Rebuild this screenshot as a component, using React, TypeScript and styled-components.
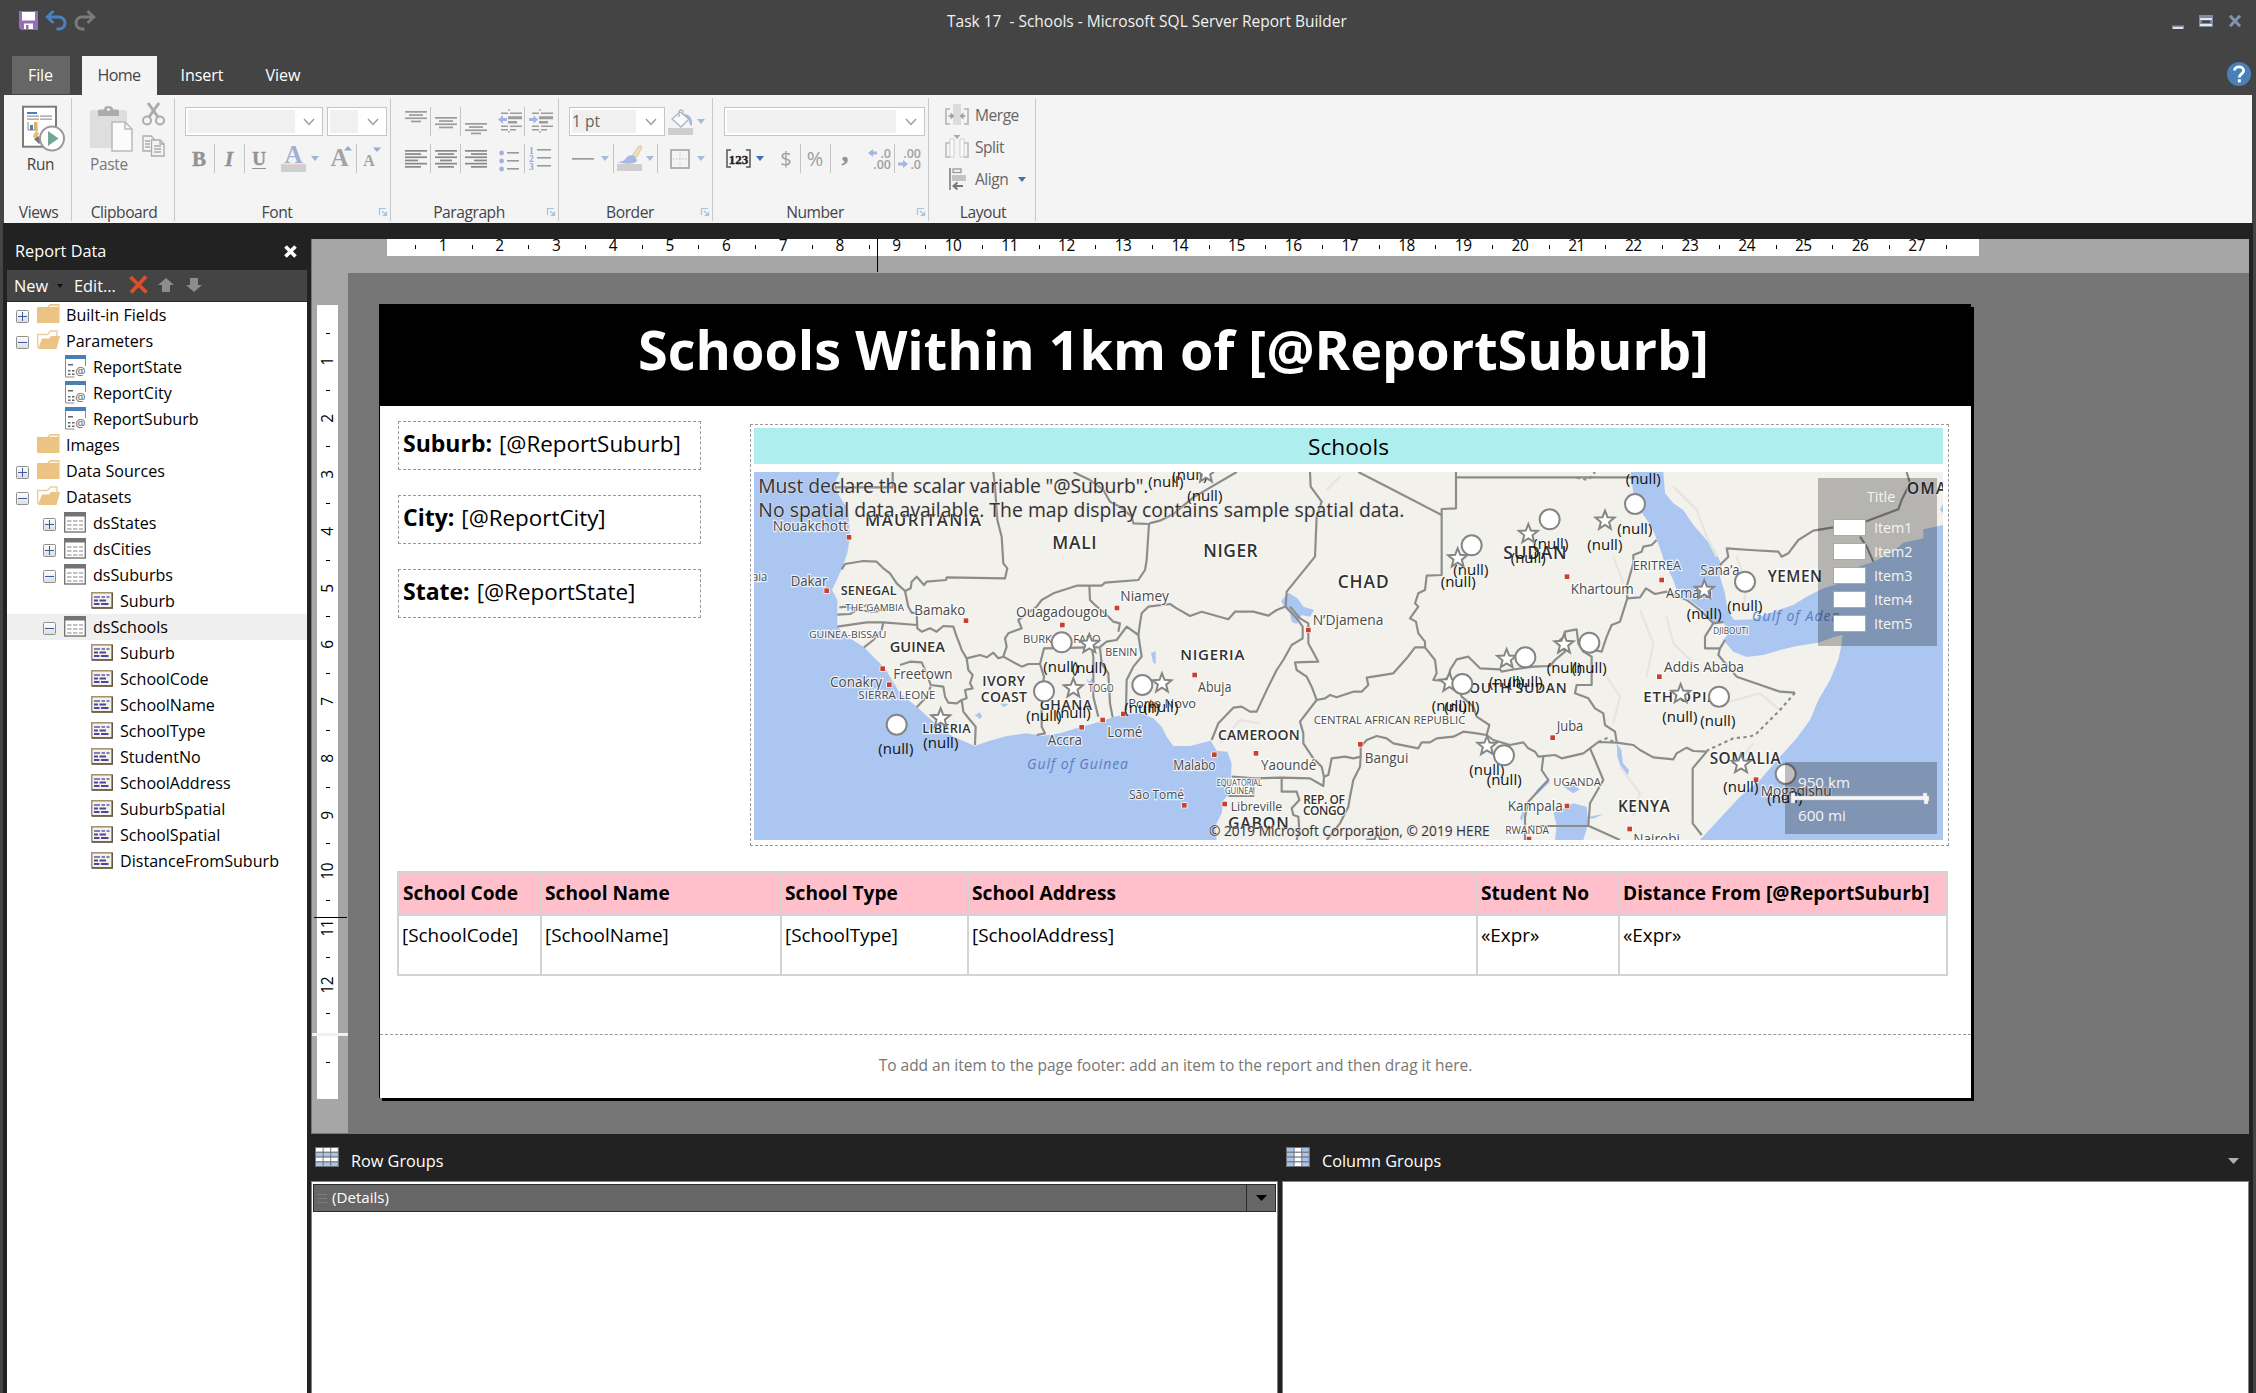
import React from "react";
import styled, { createGlobalStyle, css } from "styled-components";

const GlobalStyle = createGlobalStyle`
  html, body { margin: 0; padding: 0; background: #444; }
  *, *::before, *::after { box-sizing: border-box; }
  svg { display: block; flex: none; overflow: visible; }
`;

const uiFont = `"Open Sans", "Noto Sans", sans-serif`;

const Window = styled.div`
  width: 2256px;
  height: 1393px;
  display: flex;
  flex-direction: column;
  background: #444;
  font-family: ${uiFont};
  font-size: 16.1px;
  color: #000;
  overflow: hidden;
  white-space: pre;
`;

/* ---------- title bar ---------- */

const TitleBar = styled.header`
  height: 56px;
  display: grid;
  grid-template-columns: 947px 400px 1fr;
  align-items: center;
  padding-bottom: 15px;
  color: #f2f2f2;
  font-size: 15.49px;
`;
const QuickAccess = styled.div`
  display: flex;
  align-items: center;
  padding: 0 0 1px 19px;
  gap: 7px;
`;
const WindowButtons = styled.div`
  display: flex;
  align-items: center;
  justify-content: flex-end;
  gap: 15px;
  padding-right: 14px;
`;

/* ---------- ribbon tabs ---------- */

const TabStrip = styled.nav`
  height: 39px;
  display: flex;
  padding-left: 12px;
  letter-spacing: -0.1px;
`;
const tabKinds = {
  file: css`background: #666; color: #fff; width: 58px; margin-right: 12px; height: 38px; padding-right: 1px;`,
  active: css`background: #f4f4f4; color: #444; width: 75px; letter-spacing: -0.6px; margin-right: 5px; padding-right: 1px;`,
  plain: css`color: #fff; width: 80px;`,
};
const Tab = styled.div<{ $kind: keyof typeof tabKinds }>`
  display: flex;
  align-items: center;
  justify-content: center;
  height: 39px;
  padding-bottom: 1px;
  margin-right: 1px;
  ${(p) => tabKinds[p.$kind]}
`;
const HelpSlot = styled.div`
  margin-left: auto;
  padding: 6px 5px 0 0;
`;

/* ---------- ribbon ---------- */

const Ribbon = styled.section`
  height: 128px;
  margin: 0 4px;
  padding: 3px 0 2px;
  background: #f4f4f4;
  display: flex;
`;
const Group = styled.div<{ $w: number }>`
  width: ${(p) => p.$w}px;
  border-right: 1px solid #c8c8c8;
  display: flex;
  flex-direction: column;
  justify-content: space-between;
`;
const GroupFoot = styled.div<{ $launcher?: boolean }>`
  height: 20px;
  display: flex;
  align-items: center;
  padding: 2px ${(p) => (p.$launcher ? 3 : 0)}px 0 ${(p) => (p.$launcher ? 0 : 2)}px;
`;
const GroupLabel = styled.span`
  flex: 1;
  text-align: center;
  color: #444;
  font-size: 15.6px;
  letter-spacing: -0.45px;
`;
const ToolRows = styled.div`
  display: flex;
  flex-direction: column;
  gap: 8px;
  padding-top: 9px;
`;
const ToolRow = styled.div`
  height: 29px;
  display: flex;
  align-items: center;
`;
const Slot = styled.div<{ $ml?: number; $mt?: number; $w?: number }>`
  margin-left: ${(p) => p.$ml ?? 0}px;
  margin-top: ${(p) => p.$mt ?? 0}px;
  ${(p) => p.$w && `width: ${p.$w}px;`}
  display: flex;
  flex: none;
  justify-content: center;
  align-items: center;
`;
const Rule = styled.i<{ $ml?: number }>`
  width: 1px;
  height: 29px;
  margin-left: ${(p) => p.$ml ?? 4}px;
  background: #c4c4c4;
  flex: none;
`;
const ComboBox = styled.div<{ $w: number; $ml: number }>`
  width: ${(p) => p.$w}px;
  margin-left: ${(p) => p.$ml}px;
  height: 29px;
  flex: none;
  border: 1px solid #c6c6c6;
  background: #fff;
  display: flex;
  align-items: center;
  justify-content: space-between;
  padding: 2px 7px 2px 2px;
`;
const ComboField = styled.div<{ $w: number }>`
  width: ${(p) => p.$w}px;
  height: 23px;
  background: #f0f0f0;
  color: #666;
  font-size: 15.6px;
  line-height: 22px;
`;
const Glyph = styled.span<{ $size?: number; $variant?: "italic" | "underline" | "plain"; $color?: string }>`
  font-family: "Liberation Serif", "Times New Roman", serif;
  font-weight: bold;
  font-size: ${(p) => p.$size ?? 22}px;
  line-height: 26px;
  color: ${(p) => p.$color ?? "#929292"};
  font-style: ${(p) => (p.$variant === "italic" ? "italic" : "normal")};
  text-decoration: ${(p) => (p.$variant === "underline" ? "underline" : "none")};
  text-underline-offset: 3px;
  -webkit-text-stroke: 0.4px ${(p) => p.$color ?? "#929292"};
`;
const NumGlyph = styled.span`
  font-size: 20px;
  line-height: 26px;
  color: #a0a0a0;
`;
const BigTools = styled.div<{ $pl: number }>`
  display: flex;
  padding: 7px 0 0 ${(p) => p.$pl}px;
`;
const BigTool = styled.div<{ $color: string; $w: number; $shift: number }>`
  width: ${(p) => p.$w}px;
  display: flex;
  flex-direction: column;
  align-items: center;
  color: ${(p) => p.$color};
  font-size: 15.4px;
  letter-spacing: -0.3px;
  line-height: 25px;
  & > span { margin-right: ${(p) => p.$shift}px; }
`;
const SmallTools = styled.div`
  display: flex;
  flex-direction: column;
  gap: 9px;
  margin: -2px 0 0 9px;
`;
const LayoutTools = styled.div`
  display: flex;
  flex-direction: column;
  padding: 1px 0 0 16px;
`;
const LayoutTool = styled.div`
  height: 32px;
  display: flex;
  align-items: center;
  gap: 6px;
  color: #666;
  font-size: 15.6px;
  letter-spacing: -0.5px;
`;

/* ---------- workspace ---------- */

const Workspace = styled.div`
  flex: 1;
  min-height: 0;
  margin: 0 3px;
  background: #222;
  display: flex;
  padding-left: 4px;
`;
const SidePanel = styled.aside`
  width: 300px;
  display: flex;
  flex-direction: column;
`;
const SideHeader = styled.div`
  height: 47px;
  padding: 9px 10px 0 8px;
  display: flex;
  align-items: center;
  justify-content: space-between;
  color: #fff;
  font-size: 16.3px;
`;
const SideToolbar = styled.div`
  height: 32px;
  background: #444;
  border-bottom: 1px solid #2a2a2a;
  color: #fff;
  display: flex;
  align-items: center;
  padding: 0 0 0 7px;
  font-size: 16.3px;
`;
const ToolbarText = styled.span`
  padding-top: 1px;
`;
const Tree = styled.div`
  flex: 1;
  background: #fff;
`;
const TreeRow = styled.div<{ $level: number; $selected?: boolean }>`
  height: 26px;
  display: flex;
  align-items: center;
  padding-left: ${(p) => 9 + p.$level * 27}px;
  background: ${(p) => (p.$selected ? "#efefef" : "transparent")};
`;
const ExpanderCell = styled.div`
  width: 21px;
  padding: 3px 0 0 0;
`;
const TreeIcon = styled.div`
  width: 29px;
  padding-bottom: 2px;
`;
const Main = styled.main`
  margin-left: 4px;
  width: 1938px;
  padding-top: 16px;
  display: flex;
  flex-direction: column;
`;
const Designer = styled.div`
  height: 895px;
  background: #767676;
  border-left: 1px solid #767676;
  display: flex;
  flex-direction: column;
`;
const HRuler = styled.div`
  position: relative;
  height: 34px;
  background: #a6a6a6;
  padding-left: 75px;
  flex: none;
`;
const HScale = styled.div`
  width: 1592px;
  height: 17px;
  background: #fff;
  display: flex;
  align-items: center;
  padding-left: 28px;
  padding-bottom: 3px;
  font-size: 15.4px;
`;
const HUnit = styled.div`
  width: 56.69px;
  display: flex;
  align-items: center;
  flex: none;
  line-height: 14px;
`;
const HTick = styled.i`
  width: 1px;
  height: 4px;
  margin-top: 1px;
  background: #000;
`;
const HNumber = styled.span`
  flex: 1;
  text-align: center;
  letter-spacing: -0.4px;
  padding-right: 2px;
`;
const HMarker = styled.i`
  position: absolute;
  left: 565px;
  top: 0;
  width: 1px;
  height: 33px;
  background: #000;
`;
const DesignRow = styled.div`
  flex: 1;
  min-height: 0;
  display: flex;
`;
const VRuler = styled.div`
  position: relative;
  width: 36px;
  background: #a6a6a6;
  padding: 32px 0 0 5px;
  flex: none;
  border-bottom: 1px solid #767676;
`;
const VScale = styled.div<{ $h: number; $pad: number }>`
  width: 21px;
  height: ${(p) => p.$h}px;
  padding-top: ${(p) => p.$pad}px;
  background: #fff;
  display: flex;
  flex-direction: column;
  align-items: center;
  font-size: 15.4px;
`;
const VUnit = styled.div`
  height: 56.69px;
  width: 17px;
  display: flex;
  flex-direction: column;
  align-items: center;
  flex: none;
`;
const VTick = styled.i`
  width: 4px;
  height: 1px;
  background: #000;
  flex: none;
`;
const VNumber = styled.span`
  flex: 1;
  writing-mode: vertical-rl;
  transform: rotate(180deg);
  text-align: center;
  line-height: 17px;
  letter-spacing: -0.3px;
  padding-top: 1px;
`;
const VBreak = styled.div`
  height: 3px;
  width: 36px;
  margin-left: -5px;
  background: #f0f0f0;
`;
const VMarker = styled.i`
  position: absolute;
  top: 644px;
  left: 2px;
  width: 33px;
  height: 1px;
  background: #000;
`;
const Canvas = styled.div`
  flex: 1;
  padding: 31px 0 0 31px;
`;
const Page = styled.div`
  width: 1592px;
  height: 794px;
  background: #fff;
  border-left: 1px solid #000;
  box-shadow: 3px 3px 0 #000;
  display: flex;
  flex-direction: column;
`;
const PageTitle = styled.h1`
  margin: 0;
  height: 102px;
  background: #000;
  color: #fff;
  font-size: 53.97px;
  font-weight: 700;
  display: flex;
  align-items: center;
  justify-content: center;
  padding: 0 4px 13px 0;
`;
const PageBody = styled.div`
  height: 628px;
  display: flex;
  flex-direction: column;
`;
const UpperRow = styled.div`
  height: 465px;
  display: flex;
`;
const ParamColumn = styled.div`
  padding: 15px 0 0 18px;
  display: flex;
  flex-direction: column;
  gap: 25px;
`;
const ParamBox = styled.div`
  width: 303px;
  height: 49px;
  border: 1px dashed #999;
  padding: 0 0 5px 4px;
  display: flex;
  align-items: center;
  font-size: 22.4px;
  gap: 7px;
`;
const ParamName = styled.b`
  font-size: 23px;
`;
const MapItem = styled.div`
  width: 1199px;
  height: 422px;
  margin: 18px 0 0 49px;
  border: 1px dashed #999;
  padding: 3px;
`;
const MapTitle = styled.div`
  width: 1189px;
  height: 36px;
  margin-bottom: 8px;
  background: #afeeee;
  display: flex;
  align-items: center;
  justify-content: center;
  font-size: 22.67px;
`;
const MapViewport = styled.div`
  position: relative;
  width: 1189px;
  height: 368px;
  overflow: hidden;
`;
const Legend = styled.div`
  position: absolute;
  left: 1064px;
  top: 6px;
  width: 119px;
  height: 168px;
  background: rgba(0, 0, 0, 0.25);
  color: #f4f4f4;
  font-size: 14.3px;
  padding: 7px 0 0 15px;
`;
const LegendTitle = styled.div`
  height: 31px;
  line-height: 24px;
  padding-left: 34px;
`;
const LegendItem = styled.div`
  height: 24px;
  display: flex;
  align-items: center;
  gap: 8px;
  padding-bottom: 1px;
`;
const Swatch = styled.i`
  width: 33px;
  height: 17px;
  background: #fff;
  border: 1px solid #aaa;
`;
const ScaleBox = styled.div`
  position: absolute;
  left: 1031px;
  top: 290px;
  width: 152px;
  height: 72px;
  background: rgba(0, 0, 0, 0.25);
  color: #f4f4f4;
  font-size: 15.2px;
  padding: 9px 0 0 6px;
  line-height: 22px;
`;
const ScaleText = styled.div`
  padding-left: 7px;
`;

const ReportTable = styled.div`
  display: grid;
  grid-template-columns: 143px 240px 187px 509px 142px 328px;
  width: 1551px;
  margin-left: 17px;
  border: solid #d3d3d3;
  border-width: 2px 0 0 2px;
`;
const HeadCell = styled.div`
  height: 43px;
  padding: 0 0 1px 3px;
  background: #ffc0cb;
  border: solid #d3d3d3;
  border-width: 0 2px 2px 0;
  font-weight: 700;
  font-size: 19.15px;
  display: flex;
  align-items: center;
  &:first-child { padding-left: 4px; }
`;
const DataCell = styled.div`
  height: 60px;
  padding: 7px 0 0 3px;
  border: solid #d3d3d3;
  border-width: 0 2px 2px 0;
  font-size: 18.9px;
  line-height: 25px;
`;
const PageFooter = styled.div`
  flex: 1;
  border-top: 1px dashed #999;
  color: #767676;
  font-size: 15.51px;
  display: flex;
  align-items: center;
  justify-content: center;
  padding-bottom: 3px;
`;

/* ---------- grouping pane ---------- */

const GroupPanes = styled.div`
  flex: 1;
  display: flex;
  gap: 4px;
`;
const Pane = styled.section`
  width: 967px;
  display: flex;
  flex-direction: column;
`;
const PaneHeader = styled.div`
  height: 47px;
  padding: 7px 10px 0 4px;
  display: flex;
  align-items: center;
  gap: 12px;
  color: #fff;
  font-size: 16.25px;
`;
const PaneIcon = styled.div`
  padding-bottom: 9px;
`;
const PaneArrow = styled.div`
  margin-left: auto;
`;
const PaneBody = styled.div`
  flex: 1;
  background: #fff;
  border: 1px solid #85808a;
  border-bottom: 0;
  padding: 2px 1px;
`;
const DetailsBar = styled.div`
  height: 28px;
  border: 1px solid #2b2b2b;
  background: #666;
  color: #fff;
  display: flex;
  align-items: center;
  padding-left: 4px;
  font-size: 15.1px;
`;
const DetailsText = styled.span`
  flex: 1;
  padding: 0 0 2px 5px;
`;
const DetailsDrop = styled.div`
  width: 29px;
  height: 26px;
  border-left: 1px solid #2b2b2b;
  display: flex;
  align-items: center;
  justify-content: center;
`;

/* ---------- icons ---------- */

const Tri = ({ c = "#9db3d8", w = 8, h = 5 }: { c?: string; w?: number; h?: number }) => (
  <svg width={w} height={h} viewBox="0 0 8 5" preserveAspectRatio="none"><path d="M0 0h8L4 5z" fill={c} /></svg>
);
const Chevron = () => (
  <svg width="12" height="8" viewBox="0 0 12 8"><path d="M1 1l5 5.5L11 1" fill="none" stroke="#9a9a9a" strokeWidth="1.3" /></svg>
);
const Launcher = () => (
  <svg width="8" height="8" viewBox="0 0 8 8"><path d="M.5 7V.5H7M3 3l3 3M7.5 3.5v4h-4" fill="none" stroke="#a8c4dc" strokeWidth="1.2" /><path d="M7.5 4v3.5H4z" fill="#a8c4dc" /></svg>
);
const Lines = ({ rows, widths, align, top, color = "#9c9c9c" }: { rows: number; widths: number[]; align: "l" | "c" | "r"; top: number; color?: string }) => (
  <svg width="22" height="29" viewBox="0 0 22 29">
    {Array.from({ length: rows }, (_, i) => {
      const w = widths[i % widths.length];
      const x = align === "l" ? 0 : align === "c" ? (22 - w) / 2 : 22 - w;
      return <rect key={i} x={x} y={top + i * 3.2} width={w} height="1.7" fill={color} />;
    })}
  </svg>
);
const Indent = ({ dir }: { dir: "out" | "in" }) => (
  <svg width="24" height="26" viewBox="0 0 24 26" fill="#9c9c9c">
    <path d="M3 3.6h7v1.5H3zM12 3.6h12v1.5H12zM10 7.2h14v3H10zM10 12h9v2.6h-9zM3 16.4h7v1.5H3zM12 16.4h12v1.5H12zM3 20h7v1.5H3zM12 20h6v1.5h-6zM10.4 0h1.2v2h-1.2zM10.4 22h1.2v2h-1.2z" />
    {dir === "out" ? <path d="M0 10.5l5-4.2v2.8h4v2.8H5v2.8z" fill="#a3b5e3" /> : <path d="M9 10.5L4.5 6.3v2.8H0v2.8h4.5v2.8z" fill="#a3b5e3" />}
  </svg>
);
const Bullets = () => (
  <svg width="20" height="24" viewBox="0 0 20 24">
    {[4, 12, 20].map((y) => <g key={y}><circle cx="2.6" cy={y} r="2.4" fill="#a3b1d9" /><rect x="8" y={y - 1} width="12" height="1.6" fill="#999" /></g>)}
  </svg>
);
const Numbered = () => (
  <svg width="22" height="26" viewBox="0 0 22 26">
    {[5, 13, 21].map((y, i) => <g key={y}><text x="0" y={y + 3.4} fontFamily="Liberation Serif, serif" fontWeight="bold" fontSize="9.5" fill="#94a5d8">{i + 1}</text><rect x="8" y={y - 2} width="14" height="1.6" fill="#999" /></g>)}
  </svg>
);
const SaveIcon = () => (
  <svg width="19" height="19" viewBox="0 0 19 19"><path d="M0 0h19v19H2l-2-2z" fill="#976cbd" /><path d="M3 1h13v8.5H3zM5 12.5h9V18h-9z" fill="#fff" /><path d="M7 14h2.5v4H7z" fill="#976cbd" /></svg>
);
const Undo = ({ c, flip }: { c: string; flip?: boolean }) => (
  <svg width="22" height="21" viewBox="0 0 22 21"><g transform={flip ? "translate(22 0) scale(-1 1)" : undefined} fill="none" stroke={c} strokeWidth="3">
    <path d="M3 7h11a5.5 5.5 0 0 1 0 12h-2.5" /><path d="M8.5 1L2.2 7l6.3 6" strokeWidth="2.8" /></g></svg>
);
const MinIcon = () => (
  <svg width="12" height="16" viewBox="0 0 12 16"><path d="M0 12.5h12v1.5H0z" fill="#7f92b5" /><path d="M.5 14h11v2H.5z" fill="#e0e0e0" /></svg>
);
const MaxIcon = () => (
  <svg width="14" height="12" viewBox="0 0 14 12"><path d="M0 0h14v12H0z" fill="#7f8ba3" /><path d="M1 3h12v2H1zM1 9h12v2H1z" fill="#e6e6e6" /><path d="M3 5.5h8v2.5H3z" fill="#444" /></svg>
);
const CloseWinIcon = () => (
  <svg width="14" height="12" viewBox="0 0 14 12"><path d="M2 .8l10 10.4M12 .8L2 11.2" stroke="#8392ad" strokeWidth="3" /></svg>
);
const HelpIcon = () => (
  <svg width="24" height="24" viewBox="0 0 24 24"><circle cx="12" cy="12" r="12" fill="#4a80b8" /><path d="M7.5 8.5C7.6 3.6 16.6 3.7 16.6 8.6c0 3.3-4.3 3.2-4.3 7" fill="none" stroke="#fff" strokeWidth="2.8" /><rect x="10.8" y="17.3" width="3" height="3" fill="#fff" /></svg>
);
const RunIcon = () => (
  <svg width="43" height="47" viewBox="0 0 43 47">
    <rect x="1" y="1.7" width="33" height="40" fill="#fff" stroke="#7c7c7c" strokeWidth="2" />
    <path d="M5 7h10v2H5z" fill="#4a7fbf" /><path d="M5 10.5h12v1.3H5zM18 10.5h12v1.3H18zM5 13.5h12v1.3H5zM18 13.5h12v1.3H18z" fill="#999" />
    <path d="M6 17v8h10" fill="none" stroke="#888" /><path d="M8 20h3v5H8z" fill="#4a7fbf" /><path d="M12 17h3.5v8H12z" fill="#e0b060" />
    <path d="M16 27.500a6 6 0 0 0-3 5" fill="none" stroke="#e9bd6c" strokeWidth="4" /><path d="M12 34l5 5 3-3-4-5z" fill="#777" />
    <circle cx="30" cy="33.5" r="12" fill="#fff" stroke="#9a9a9a" strokeWidth="2" /><path d="M26 26v15l10.5-7.5z" fill="#6fa893" />
  </svg>
);
const PasteIcon = () => (
  <svg width="43" height="47" viewBox="0 0 43 47">
    <rect x="0" y="5" width="37" height="38" rx="2" fill="#dedede" /><path d="M8 11V6q0-1.5 2-1.5h4Q14 1 18.5 1T23 4.5h4q2 0 2 1.5v5z" fill="#ababab" /><circle cx="18.5" cy="4.5" r="1.6" fill="#eee" />
    <path d="M22 17h13l7 7v22H22z" fill="#fbfbfb" stroke="#b9b9b9" strokeWidth="1.5" /><path d="M35 17v7h7" fill="none" stroke="#b9b9b9" strokeWidth="1.5" />
  </svg>
);
const CutIcon = () => (
  <svg width="23" height="23" viewBox="0 0 23 23" fill="none" stroke="#ababab"><path d="M6 0l10 14M17 0L7 14" strokeWidth="3" /><circle cx="5" cy="17.5" r="4" strokeWidth="2" /><circle cx="18" cy="17.5" r="4" strokeWidth="2" /></svg>
);
const CopyIcon = () => (
  <svg width="23" height="22" viewBox="0 0 23 22" stroke="#ababab" strokeWidth="1.3"><path d="M1 1h8l3 3v12H1z" fill="#f4f4f4" /><path d="M3 6h5M3 9h5M3 12h5" /><path d="M9.5 5H18l4 4v12H9.5z" fill="#f4f4f4" /><path d="M18 5v4h4M12 11h7M12 14h7M12 17h7" fill="none" /></svg>
);
const FontColorIcon = () => (
  <svg width="25" height="28" viewBox="0 0 25 28"><text x="12.5" y="18" textAnchor="middle" fontFamily="Liberation Serif, serif" fontWeight="bold" fontSize="25" fill="#a3afcf">A</text><rect y="19" width="25" height="8" fill="#cfcfcf" /><rect y="18.5" width="25" height="1.2" fill="#f3d3c3" /></svg>
);
const SizedA = ({ big }: { big?: boolean }) => (
  <svg width="22" height="26" viewBox="0 0 22 26"><text x={big ? 8.5 : 7} y="22" textAnchor="middle" fontFamily="Liberation Serif, serif" fontWeight="bold" fontSize={big ? 25 : 16} fill="#a3a3a3">A</text>{big ? <path d="M13 6.5h8L17 2z" fill="#94a9d8" /> : <path d="M11 3.5h8l-4 4.5z" fill="#94a9d8" />}</svg>
);
const BucketIcon = () => (
  <svg width="25" height="26" viewBox="0 0 25 26"><path d="M4 10l8-7 9 7-8 8z" fill="#fafafa" stroke="#a9b4cc" strokeWidth="1.3" /><path d="M11 8V3q0-2 2-2t2 2v3" fill="none" stroke="#b5b5b5" strokeWidth="1.3" /><path d="M15 5q10 0 9 12-3-1-3-6z" fill="#a8b7d6" /><rect y="19" width="25" height="7" fill="#cecece" /></svg>
);
const BrushIcon = () => (
  <svg width="25" height="27" viewBox="0 0 25 27"><path d="M15 11l6-9q3-3 4 0l-5 10z" fill="#f0deb4" stroke="#c9bfa8" strokeWidth=".8" /><path d="M0 17q7 0 9-4 3-4 8-2 6 5 0 7-7 2-17-1z" fill="#a7b9e2" /><rect y="19" width="25" height="7" fill="#cecece" /></svg>
);
const BorderIcon = () => (
  <svg width="20" height="20" viewBox="0 0 20 20"><rect x="1" y="1" width="18" height="18" fill="none" stroke="#a2a2a2" strokeWidth="1.6" /><path d="M10 3v14M3 10h14" stroke="#c4c4c4" strokeDasharray="1.5 1.5" /></svg>
);
const LineIcon = () => <svg width="22" height="2"><rect width="22" height="1.7" fill="#9c9c9c" /></svg>;
const FormatIcon = () => (
  <svg width="25" height="20" viewBox="0 0 25 20"><path d="M5 1H1v17h4M20 1h4v17h-4" fill="none" stroke="#555" strokeWidth="1.5" /><text x="12.5" y="14.5" textAnchor="middle" fontFamily="Liberation Serif, serif" fontWeight="bold" fontSize="13" fill="#222" stroke="#222" strokeWidth=".4">123</text></svg>
);
const DecimalIcon = ({ more }: { more?: boolean }) => (
  <svg width="24" height="24" viewBox="0 0 24 24" fontFamily="Open Sans, sans-serif" fontSize="12.5" fontWeight="600" fill="#a0a0a0">
    <text x="23" y="10.5" textAnchor="end">{more ? ".0" : ".00"}</text><text x="23" y="21.5" textAnchor="end">{more ? ".00" : ".0"}</text>
    {more ? <path d="M0 6l5-4v2.5h4v3H5V10z" fill="#a3b5e3" /> : <path d="M10 17l-5-4v2.5H0v3h5V21z" fill="#a3b5e3" />}
  </svg>
);
const MergeIcon = () => (
  <svg width="24" height="22" viewBox="0 0 24 22"><path d="M5 5H1v15h4M19 5h4v15h-4" fill="none" stroke="#b3b3b3" strokeWidth="1.6" /><rect x="8" y="0" width="8" height="21" fill="#dcdcdc" /><path d="M3.500 11.200h2V8.500L9.500 12l-4 3.500v-2.700h-2zM20.500 11.200h-2V8.500L14.500 12l4 3.500v-2.700h2z" fill="#a0a0a0" /></svg>
);
const SplitIcon = () => (
  <svg width="24" height="24" viewBox="0 0 24 24"><path d="M5 8H1v14h4M19 8h4v14h-4" fill="none" stroke="#b9b9b9" strokeWidth="1.5" /><path d="M5 4h4v18H5zM15 4h4v18h-4z" fill="#fafafa" stroke="#cfcfcf" /><path d="M8.5 0h7L12 4z" fill="#aaa" /></svg>
);
const AlignIcon = () => (
  <svg width="24" height="22" viewBox="0 0 24 22"><path d="M5 0v22" stroke="#777" strokeWidth="1.5" /><rect x="8" y="1" width="8" height="3.5" fill="none" stroke="#999" strokeWidth="1.3" /><rect x="7" y="7" width="14" height="6" fill="#c4c4c4" /><path d="M18 18H9M12.5 14.5L8.5 18l4 3.5" fill="none" stroke="#777" strokeWidth="2" /></svg>
);
const Expander = ({ open }: { open?: boolean }) => (
  <svg width="13" height="13" viewBox="0 0 13 13"><defs><linearGradient id="exp" x1="0" y1="0" x2="0" y2="1"><stop offset="0" stopColor="#fff" /><stop offset="1" stopColor="#dcdcdc" /></linearGradient></defs>
    <rect x=".5" y=".5" width="12" height="12" rx="1" fill="url(#exp)" stroke="#8f8f8f" /><path d={open ? "M2 6.5h9" : "M2 6.5h9M6.5 2v9"} stroke="#3a5ca8" /></svg>
);
const Folder = ({ open }: { open?: boolean }) =>
  open ? (
    <svg width="23" height="20" viewBox="0 0 23 20"><path d="M.7 18V4.5h9.8l3-3.500h6.500v6" fill="none" stroke="#ecd0a0" strokeWidth="1.5" /><path d="M1 19L5 8.5h7l2-2.500h9l-3.500 13z" fill="#ebc382" /></svg>
  ) : (
    <svg width="23" height="20" viewBox="0 0 23 20"><path d="M0 3h10l3-3h9.500v19H0z" fill="#ebc382" /><path d="M13.500 1.500h8v1.500H12z" fill="#fdf3df" /></svg>
  );
const ParamIcon = () => (
  <svg width="22" height="23" viewBox="-1 0 22 23"><path d="M.5 1v21h9M20.500 1v10" fill="none" stroke="#8a8a8a" /><path d="M0 0h21v4H0z" fill="#4a7fb5" /><path d="M3 9h5v1.500H3zM3 15h2.500v1.500H3zM7 15h2.500v1.500H7zM3 18.500h2.500V20H3zM7 18.500h2.500V20H7z" fill="#666" />
    <text x="15.500" y="19.500" textAnchor="middle" fontFamily="Open Sans, sans-serif" fontSize="11.500" fontWeight="600" fill="#777">@</text></svg>
);
const DatasetIcon = () => (
  <svg width="22" height="21" viewBox="0 0 22 21"><rect x=".7" y="1" width="20.600" height="19" fill="#fff" stroke="#767676" strokeWidth="1.400" /><path d="M0 0h22v4.500H0z" fill="#737373" /><path d="M3 9h16M3 13h16M3 17h16" stroke="#b0b0b0" strokeWidth="1.600" strokeDasharray="4.500 1.500" /></svg>
);
const FieldIcon = () => (
  <svg width="22" height="17" viewBox="0 0 22 17"><rect x=".8" y=".8" width="20.400" height="15" fill="#f7f3e4" stroke="#a08f6c" strokeWidth="1.500" /><path d="M21.300 1v15H1" fill="none" stroke="#5d5344" strokeWidth="1.300" />
    <path d="M3 5h6M10.500 5h3.500M15.500 5h3" stroke="#5a58c0" strokeWidth="1.500" /><path d="M3 8.500h4M8.500 8.500H15" stroke="#4845b0" strokeWidth="1.800" /><path d="M3 12h5.500M10 12h7.500" stroke="#4845b0" strokeWidth="1.800" /></svg>
);
const PanelClose = () => (
  <svg width="13" height="13" viewBox="0 0 13 13"><path d="M1.500 1.500l10 10M11.500 1.500l-10 10" stroke="#fff" strokeWidth="3.600" /></svg>
);
const DeleteIcon = () => (
  <svg width="19" height="19" viewBox="0 0 19 19"><path d="M1.500 2l16 15.500M17 1.500L2 17.500" stroke="#d9512c" strokeWidth="3.800" /></svg>
);
const ArrowIcon = ({ down }: { down?: boolean }) => (
  <svg width="16" height="14" viewBox="0 0 16 14"><path transform={down ? "rotate(180 8 7)" : undefined} d="M8 0l8 7h-4v7H4V7H0z" fill="#8d8d8d" /></svg>
);
const RowGroupIcon = () => (
  <svg width="24" height="20" viewBox="0 0 24 20"><rect width="24" height="20" fill="#6e7278" />
    {[0, 1, 2, 3].map((r) => [0, 1, 2].map((c) => <rect key={`${r}${c}`} x={1 + c * 7.6} y={1 + r * 4.8} width="6.600" height="3.600" fill={r % 2 ? "#a9c4e4" : "#fff"} />))}
  </svg>
);
const ColumnGroupIcon = () => (
  <svg width="24" height="20" viewBox="0 0 24 20"><rect width="24" height="20" fill="#6e7278" />
    {[0, 1, 2, 3].map((r) => [0, 1, 2].map((c) => <rect key={`${r}${c}`} x={1 + c * 7.6} y={1 + r * 4.8} width="6.600" height="3.600" fill={c === 1 ? "#fff" : "#a9c4e4"} />))}
  </svg>
);
const GripIcon = () => (
  <svg width="9" height="9" viewBox="0 0 9 9"><path d="M0 .5h9M0 4.500h9M0 8.500h9" stroke="#7d7d7d" /></svg>
);

/* ---------- map ---------- */

const land =
  "M300 186L286 215 290 245 325 300 330 380 322 430 305 478 290 510 276 540 292 570 292 650 330 685 372 712 400 740 435 775 450 800 480 850 530 890 580 935 640 980 705 1008 740 995 800 978 860 970 905 978 960 970 1020 952 1080 935 1118 922 1150 914 1200 910 1240 925 1265 950 1280 980 1300 1008 1350 1008 1412 992 1430 1022 1462 1025 1475 1060 1470 1150 1450 1170 1445 1210 1425 1250 1430 1290H2880L2940 1225 3000 1160 3060 1110 3120 1040 3170 985 3210 930 3235 870 3270 810 3295 750 3303 712 3308 674 3280 682 3235 698 3170 708 3120 720 3070 735 3020 741 2980 725 2950 690 2968 665 2950 640 2920 640 2890 600 2840 565 2810 540 2800 510 2775 460 2752 392 2735 350 2700 300 2680 250 2672 186Z";
const arabia =
  "M2770 186L2775 250 2800 280 2830 300 2860 345 2895 385 2925 420 2945 465 2940 500 2955 550 2962 600 2982 630 3040 628 3100 605 3160 585 3200 560 3250 535 3300 520 3355 470 3400 455 3450 432 3490 398 3550 385 3550 358 3609 345V310L3600 300 3609 280V186Z";
const lakes = [
  "M1624 572L1645 548 1672 565 1690 590 1722 600 1710 620 1685 615 1670 642 1655 635 1650 610 1632 590Z",
  "M1233 730l14-7v40l-8-6z",
  "M2445 1290L2450 1245 2440 1208 2480 1190 2500 1180 2540 1190 2545 1240 2530 1290Z",
  "M2630 1000l14 20 5 40 18 20-3 15-20-20-12-35z",
  "M2425 1105l4 12-38 36-2-12z",
  "M2340 1225l16-40 4 5-14 42z",
  "M2470 1130l20-12 30 20-20 12z",
  "M2540 1222l50-10-30 14z",
  "M780 880l25 2-14 10z",
  "M705 915l14-8 8 12-8 8z",
  "M1040 805l8 10 8-12 4 20-14 4z",
];
const borders = [
  "285 232 458 232 458 186",
  "760 186 765 230 772 330 785 380 790 460 802 475 795 505 620 502 618 510 560 515 552 525 530 500 515 515 512 535 495 543",
  "305 478 315 462 370 453 410 455 430 475 450 490 470 520 495 543 505 590 515 608 530 610 532 655 545 665 570 655 590 665 610 648 640 650 650 680 660 705 665 720 680 745 720 735 740 742 760 728 775 745 790 740",
  "298 592 316 590 350 598 380 586 420 598",
  "292 614 330 612 350 600 400 605 450 600",
  "292 650 380 637 430 637 530 645",
  "430 637 425 660 400 690 372 712",
  "790 740 800 710 795 685 805 670 845 655 835 630 890 590 905 570 940 550 1010 527 1085 527 1095 518 1195 510 1215 480 1220 450 1227 342 1180 340 1175 320 1140 290 1110 275 1090 240 1050 210 1000 186",
  "1228 340 1260 332 1300 312 1360 262 1490 186",
  "1048 527 1050 570 1065 585 1095 610 1120 635 1140 640 1135 665",
  "1075 715 1100 695 1130 690 1160 650 1195 675 1200 640 1205 610 1225 590 1290 582 1310 595 1350 618 1385 605 1465 628 1485 605 1540 605 1585 617 1610 600 1635 590",
  "790 740 845 770 865 762 900 762 912 715 1050 712 1075 712",
  "680 745 685 780 698 795 690 820 698 835 675 840 680 865 665 870 670 905 690 930 707 950 705 1005",
  "480 765 510 755 545 757 560 790 572 825 610 830 615 860 625 878 650 880 665 870",
  "572 830 560 860 530 892",
  "900 762 912 800 905 850 905 950 915 970 890 975",
  "1055 712 1060 740 1060 860 1075 920",
  "1080 715 1085 760 1105 790 1110 880 1118 922",
  "1195 675 1205 740 1180 770 1160 810 1158 900",
  "1710 186 1712 230 1745 275 1730 320 1725 440 1640 545 1637 590 1670 625 1688 650 1688 685 1655 705 1630 750 1610 780 1585 830 1550 905 1530 905 1505 890 1480 893 1435 940 1415 990",
  "1650 590 1680 625 1705 640 1705 700 1735 755 1665 757 1670 780 1700 800 1715 830 1730 870 1680 935 1690 970 1690 1000 1720 1045 1745 1070 1752 1100",
  "1855 186 1950 235 2105 315",
  "2148 186 2148 295 2105 297 2105 495 2060 497 2055 540 2035 550 2025 580 2035 590 2010 625 2028 635 2035 670 2055 695 2055 712 2085 750 2090 790 2080 810 2105 812 2130 800 2130 780 2150 748 2185 740 2220 775 2280 778 2285 785 2310 780 2380 770 2430 768 2445 750 2475 725 2460 690 2475 680 2475 665 2510 658 2515 700 2530 725 2555 740 2555 825 2510 825 2505 850 2545 865 2565 895 2590 910 2595 945 2625 965 2630 995",
  "2148 202 2680 202",
  "1730 870 1755 865 1770 855 1790 862 1840 845 1865 845 1885 825 1880 803 1960 790 2000 745 2025 712 2055 712",
  "1752 1100 1765 1095 1775 1045 1815 1040 1840 1045 1862 1040 1862 1010 1880 990 1910 978 1940 985 1960 1000 2035 1015 2045 997 2070 997 2090 985 2140 980 2170 965 2210 970 2240 975 2248 945 2210 920 2200 890 2165 860 2155 835",
  "1862 1040 1860 1070 1840 1110 1830 1160 1825 1190 1800 1240 1760 1290",
  "1475 1100 1545 1105 1625 1103 1710 1105 1750 1128 1752 1100",
  "1540 1108 1540 1158 1465 1158",
  "1625 1103 1625 1145 1670 1145 1678 1170 1655 1195 1660 1215 1675 1220 1678 1260 1670 1290",
  "2240 975 2260 990 2310 1005 2350 997 2365 1015 2385 1025 2395 1040 2445 1035 2465 1045 2530 1030 2550 1015 2575 996 2630 998 2680 1005 2700 1020 2740 1042 2800 1048 2810 1030 2840 1013 2860 1023 2900 1025 2858 1075 2858 1240 2885 1275",
  "2410 1040 2405 1080 2425 1110 2365 1175 2355 1220 2355 1290",
  "2550 1015 2565 1050 2590 1110 2550 1180 2545 1247 2640 1290",
  "2370 1248 2545 1248",
  "2750 390 2735 405 2710 410 2705 425 2680 435 2680 460 2660 530 2662 565 2640 635 2615 645 2600 680 2585 725 2560 720",
  "2662 565 2700 562 2718 535 2745 552 2780 545 2840 570 2880 600 2920 640 2895 680 2895 715 2940 715 2935 735 2960 765 2990 800 3120 845 3165 848",
  "2955 690 2940 715",
  "2920 640 2950 636",
  "2940 465 2965 440 2960 415 3030 420 3115 425 3125 440 3145 430 3175 390 3220 362 3280 352 3375 335 3475 298 3485 270 3510 220 3500 186",
  "3360 380 3380 410 3400 455",
];
const dashedBorders = ["3165 848 3120 900 3050 970 3030 980 2980 985 2900 1022", "2510 203 2545 210 2565 186", "2575 996 2600 985 2620 995"];
const relief = [
  "2800 230 2870 300 2900 380 2930 440", "2990 440 3020 520 3010 600", "2700 600 2740 700 2720 800", "2780 620 2800 700 2860 760", "2600 800 2640 860 2620 940",
  "2640 1070 2700 1150 2680 1220", "2950 880 3060 850 3120 900", "3040 1000 2990 1060", "1440 1000 1500 930 1560 940", "1760 240 1800 200", "2620 440 2650 520",
];

type Label = [string, number, number, number, number, string?];
const labels: Label[] = [
  ["MAURITANIA", 375, 348, 348, 50, "b"], ["MALI", 937, 418, 133, 52, "b"], ["NIGER", 1390, 442, 163, 52, "b"], ["CHAD", 1793, 535, 153, 52, "b"], ["SUDAN", 2290, 448, 190, 52, "b"],
  ["Nouakchott", 98, 364, 226, 42], ["Dakar", 152, 527, 110, 42], ["SENEGAL", 302, 555, 168, 38, "b"], ["THE GAMBIA", 316, 602, 176, 26], ["Bamako", 523, 614, 153, 42],
  ["GUINEA-BISSAU", 207, 683, 232, 28], ["GUINEA", 449, 727, 166, 44, "b"], ["Conakry", 270, 832, 156, 42], ["Freetown", 460, 808, 178, 42], ["SIERRA LEONE", 355, 868, 231, 31],
  ["IVORY", 727, 829, 128, 42, "b"], ["COAST", 722, 876, 139, 42, "b"], ["LIBERIA", 547, 969, 145, 38, "b"], ["GHANA", 899, 899, 157, 42, "b"], ["BURKINA FASO", 849, 699, 233, 33],
  ["Ouagadougou", 828, 622, 274, 42], ["Niamey", 1141, 574, 146, 42], ["BENIN", 1096, 737, 96, 33], ["TOGO", 1045, 846, 76, 30], ["Accra", 923, 1004, 103, 42], ["Lomé", 1102, 980, 105, 42],
  ["Porto Novo", 1165, 895, 203, 40], ["aia", 36, 512, 46, 40], ["São Tomé", 1167, 1167, 165, 40], ["NIGERIA", 1321, 749, 192, 45, "b"], ["Abuja", 1374, 845, 100, 42],
  ["N’Djamena", 1718, 645, 212, 42], ["CAMEROON", 1434, 990, 245, 42, "b"], ["Malabo", 1300, 1081, 127, 41], ["Yaoundé", 1563, 1081, 166, 42], ["EQUATORIAL", 1430, 1128, 136, 25],
  ["GUINEA", 1455, 1152, 85, 25], ["Libreville", 1472, 1202, 155, 40], ["GABON", 1464, 1258, 182, 48, "b"], ["REP. OF", 1690, 1181, 125, 36, "b"], ["CONGO", 1689, 1216, 128, 36, "b"],
  ["Bangui", 1874, 1059, 131, 42], ["CENTRAL AFRICAN REPUBLIC", 1721, 941, 455, 33], ["SOUTH SUDAN", 2162, 850, 318, 42, "b"], ["Juba", 2450, 963, 80, 41], ["UGANDA", 2440, 1127, 143, 34],
  ["Kampala", 2303, 1203, 165, 42], ["RWANDA", 2296, 1271, 131, 31], ["KENYA", 2634, 1205, 155, 46, "b"], ["Nairobi", 2680, 1303, 140, 42], ["Khartoum", 2492, 551, 189, 42],
  ["ERITREA", 2678, 480, 145, 36], ["Asmara", 2778, 563, 138, 42], ["ETHIOPIA", 2710, 875, 222, 45, "b"], ["Addis Ababa", 2772, 785, 240, 42], ["SOMALIA", 2909, 1062, 213, 46, "b"],
  ["Mogadishu", 3062, 1158, 213, 42], ["YEMEN", 3083, 516, 163, 46, "b"], ["Sana’a", 2881, 496, 118, 42], ["DJIBOUTI", 2920, 671, 105, 26], ["OMAN", 3501, 252, 158, 46, "b"],
  ["Gulf of Guinea", 861, 1077, 303, 42, "sea"], ["Gulf of Aden", 3036, 633, 263, 42, "sea"],
];
const cities = [327, 382, 260, 542, 678, 632, 428, 776, 448, 824, 967, 645, 1131, 594, 1025, 952, 1088, 930, 1150, 912, 1364, 795, 1705, 660, 1423, 1034, 1548, 1030, 1333, 1186, 1454, 1182, 1861, 1003, 2438, 983, 2481, 1188, 2669, 1257, 2367, 1287, 2481, 500, 2765, 510, 2758, 800, 3048, 1109];
const circles = [470, 944, 965, 697, 912, 844, 1207, 825, 2195, 406, 2429, 328, 2356, 742, 2167, 822, 2292, 1036, 2685, 282, 2548, 698, 3015, 515, 2937, 860, 3137, 1092];
const stars = [602, 925, 1048, 702, 1000, 835, 1266, 820, 1398, 190, 2153, 445, 2365, 372, 2300, 747, 2128, 818, 2241, 1008, 1912, 1298, 2595, 332, 2472, 703, 2893, 540, 2822, 852, 3003, 1062];
const nulls = [415, 1031, 550, 1013, 910, 787, 995, 788, 859, 932, 947, 925, 1153, 908, 1210, 905, 1225, 230, 1297, 210, 1342, 273, 2140, 495, 2102, 531, 2380, 416, 2312, 458, 2247, 830, 2303, 831, 2075, 903, 2113, 906, 2188, 1095, 2240, 1126, 2657, 221, 2632, 371, 2542, 420, 2420, 790, 2495, 788, 2962, 603, 2840, 626, 2767, 935, 2881, 947, 2950, 1145, 3082, 1180];

const pairs = (a: number[]) => a.reduce<[number, number][]>((r, v, i) => (i % 2 ? r : [...r, [v, a[i + 1]]]), []);
const starPath = Array.from({ length: 10 }, (_, i) => {
  const r = i % 2 ? 13 : 30;
  const a = (Math.PI / 5) * i - Math.PI / 2;
  return `${i ? "L" : "M"}${(r * Math.cos(a)).toFixed(1)} ${(r * Math.sin(a)).toFixed(1)}`;
}).join("") + "Z";

const AfricaMap = () => (
  <svg width="1189" height="368" viewBox="42 186 3567 1104" fontFamily="Open Sans, Noto Sans, sans-serif">
    <rect x="42" y="186" width="3567" height="1104" fill="#abc6f1" />
    <path d={land} fill="#f2f1ec" />
    <path d={arabia} fill="#f2f1ec" />
    {lakes.map((d) => <path key={d} d={d} fill="#abc6f1" />)}
    <g fill="none" stroke="#e7e5de" strokeWidth="7" strokeLinejoin="round">
      {relief.map((p) => <polyline key={p} points={p} />)}
    </g>
    <g fill="none" stroke="#8c8c8a" strokeWidth="6.5" strokeLinejoin="round">
      {borders.map((p) => <polyline key={p} points={p} />)}
      {dashedBorders.map((p) => <polyline key={p} points={p} strokeDasharray="10 10" />)}
    </g>
    {pairs(cities).map(([x, y]) => <rect key={`${x}-${y}`} x={x - 7} y={y - 7} width="14" height="14" fill="#c8402f" stroke="#fff" strokeWidth="4" paintOrder="stroke" />)}
    {labels.map(([t, x, y, w, s, k]) => (
      <text key={`${t}${x}`} x={x} y={y} fontSize={s} textLength={w} lengthAdjust={k === "b" || k === "sea" ? "spacing" : "spacingAndGlyphs"}
        fontWeight={k === "b" ? 600 : k === "sea" ? 400 : 500} fontStyle={k === "sea" ? "italic" : "normal"}
        fill={k === "sea" ? "#5a7cc4" : k === "b" ? "#333" : "#4a4a4a"} stroke={k === "sea" ? "none" : "#fff"} strokeWidth="7" strokeOpacity=".75" paintOrder="stroke">{t}</text>
    ))}
    {pairs(nulls).map(([x, y]) => <text key={`${x}-${y}`} x={x} y={y} fontSize="45" textLength="105" fill="#111">(null)</text>)}
    <g fill="#fff" stroke="#858585" strokeWidth="6">
      {pairs(stars).map(([x, y]) => <path key={`${x}-${y}`} d={starPath} transform={`translate(${x} ${y})`} />)}
      {pairs(circles).map(([x, y]) => <circle key={`${x}-${y}`} cx={x} cy={y} r="30" />)}
    </g>
    <g fontSize="58" fill="#333338" stroke="#e8e4dc" strokeOpacity=".55" strokeWidth="5" paintOrder="stroke">
      <text x="55" y="248" textLength="1170">Must declare the scalar variable "@Suburb".</text>
      <text x="55" y="320" textLength="1938">No spatial data available. The map display contains sample spatial data.</text>
      <text x="1407" y="1277" fontSize="41" textLength="842">© 2019 Microsoft Corporation, © 2019 HERE</text>
    </g>
  </svg>
);

/* ---------- data ---------- */

type Node = { level: number; text: string; icon: "folder" | "open" | "param" | "dataset" | "field"; exp?: "+" | "-"; selected?: boolean };
const field = (text: string): Node => ({ level: 2, text, icon: "field" });
const tree: Node[] = [
  { level: 0, text: "Built-in Fields", icon: "folder", exp: "+" },
  { level: 0, text: "Parameters", icon: "open", exp: "-" },
  { level: 1, text: "ReportState", icon: "param" },
  { level: 1, text: "ReportCity", icon: "param" },
  { level: 1, text: "ReportSuburb", icon: "param" },
  { level: 0, text: "Images", icon: "folder" },
  { level: 0, text: "Data Sources", icon: "folder", exp: "+" },
  { level: 0, text: "Datasets", icon: "open", exp: "-" },
  { level: 1, text: "dsStates", icon: "dataset", exp: "+" },
  { level: 1, text: "dsCities", icon: "dataset", exp: "+" },
  { level: 1, text: "dsSuburbs", icon: "dataset", exp: "-" },
  field("Suburb"),
  { level: 1, text: "dsSchools", icon: "dataset", exp: "-", selected: true },
  ...["Suburb", "SchoolCode", "SchoolName", "SchoolType", "StudentNo", "SchoolAddress", "SuburbSpatial", "SchoolSpatial", "DistanceFromSuburb"].map(field),
];
const nodeIcons = { folder: <Folder />, open: <Folder open />, param: <ParamIcon />, dataset: <DatasetIcon />, field: <FieldIcon /> };
const columns = [
  ["School Code", "[SchoolCode]"], ["School Name", "[SchoolName]"], ["School Type", "[SchoolType]"],
  ["School Address", "[SchoolAddress]"], ["Student No", "«Expr»"], ["Distance From [@ReportSuburb]", "«Expr»"],
];
const params = [["Suburb:", "[@ReportSuburb]"], ["City:", "[@ReportCity]"], ["State:", "[@ReportState]"]];
const range = (n: number) => Array.from({ length: n }, (_, i) => i + 1);

const Foot = ({ label, launcher }: { label: string; launcher?: boolean }) => (
  <GroupFoot $launcher={launcher}><GroupLabel>{label}</GroupLabel>{launcher && <Launcher />}</GroupFoot>
);

export default function App() {
  return (
    <Window>
      <GlobalStyle />
      <TitleBar>
        <QuickAccess><SaveIcon /><Undo c="#4a82bf" /><Undo c="#7a7a7a" flip /></QuickAccess>
        <span>Task 17  - Schools - Microsoft SQL Server Report Builder</span>
        <WindowButtons><MinIcon /><MaxIcon /><CloseWinIcon /></WindowButtons>
      </TitleBar>
      <TabStrip>
        <Tab $kind="file">File</Tab>
        <Tab $kind="active">Home</Tab>
        <Tab $kind="plain">Insert</Tab>
        <Tab $kind="plain">View</Tab>
        <HelpSlot><HelpIcon /></HelpSlot>
      </TabStrip>
      <Ribbon>
        <Group $w={68}>
          <BigTools $pl={18}><BigTool $w={43} $color="#444" $shift={6}><RunIcon /><span>Run</span></BigTool></BigTools>
          <Foot label="Views" />
        </Group>
        <Group $w={103}>
          <BigTools $pl={18}>
            <BigTool $w={43} $color="#777" $shift={5}><PasteIcon /><span>Paste</span></BigTool>
            <SmallTools><CutIcon /><CopyIcon /></SmallTools>
          </BigTools>
          <Foot label="Clipboard" />
        </Group>
        <Group $w={216}>
          <ToolRows>
            <ToolRow>
              <ComboBox $ml={10} $w={138}><ComboField $w={107} /><Chevron /></ComboBox>
              <ComboBox $ml={4} $w={60}><ComboField $w={28} /><Chevron /></ComboBox>
            </ToolRow>
            <ToolRow>
              <Slot $ml={16} $w={16}><Glyph $size={21}>B</Glyph></Slot><Rule $ml={7} />
              <Slot $ml={7} $w={14}><Glyph $variant="italic" $size={21}>I</Glyph></Slot><Rule $ml={8} />
              <Slot $ml={6} $w={16}><Glyph $variant="underline" $size={19}>U</Glyph></Slot>
              <Slot $ml={14}><FontColorIcon /></Slot><Slot $ml={5}><Tri /></Slot>
              <Slot $ml={12} $mt={-3}><SizedA big /></Slot><Rule $ml={3} />
              <Slot $ml={5} $mt={-3}><SizedA /></Slot>
            </ToolRow>
          </ToolRows>
          <Foot label="Font" launcher />
        </Group>
        <Group $w={168}>
          <ToolRows>
            <ToolRow>
              <Slot $ml={14}><Lines rows={4} widths={[22, 14, 22, 10]} align="c" top={4} /></Slot><Rule $ml={3} />
              <Slot $ml={4}><Lines rows={4} widths={[22, 14, 22, 14]} align="c" top={10} /></Slot><Rule $ml={3} />
              <Slot $ml={4}><Lines rows={4} widths={[22, 14, 22, 10]} align="c" top={16} /></Slot>
              <Slot $ml={11}><Indent dir="out" /></Slot><Rule $ml={2} />
              <Slot $ml={4}><Indent dir="in" /></Slot>
            </ToolRow>
            <ToolRow>
              <Slot $ml={14}><Lines rows={6} widths={[22, 16, 22, 13]} align="l" top={6} color="#888" /></Slot><Rule $ml={3} />
              <Slot $ml={4}><Lines rows={6} widths={[22, 16, 22, 12]} align="c" top={6} color="#888" /></Slot><Rule $ml={3} />
              <Slot $ml={4}><Lines rows={6} widths={[22, 16, 22, 13]} align="r" top={6} color="#888" /></Slot>
              <Slot $ml={12} $mt={4}><Bullets /></Slot><Rule $ml={5} />
              <Slot $ml={4}><Numbered /></Slot>
            </ToolRow>
          </ToolRows>
          <Foot label="Paragraph" launcher />
        </Group>
        <Group $w={154}>
          <ToolRows>
            <ToolRow>
              <ComboBox $ml={10} $w={96}><ComboField $w={64}>1 pt</ComboField><Chevron /></ComboBox>
              <Slot $ml={3}><BucketIcon /></Slot><Slot $ml={4}><Tri c="#a9bad8" /></Slot>
            </ToolRow>
            <ToolRow>
              <Slot $ml={13}><LineIcon /></Slot><Slot $ml={7}><Tri c="#a9bad8" /></Slot><Rule $ml={4} />
              <Slot $ml={3}><BrushIcon /></Slot><Slot $ml={4}><Tri c="#a9bad8" /></Slot><Rule $ml={3} />
              <Slot $ml={12}><BorderIcon /></Slot><Slot $ml={7}><Tri c="#a9bad8" /></Slot>
            </ToolRow>
          </ToolRows>
          <Foot label="Border" launcher />
        </Group>
        <Group $w={216}>
          <ToolRows>
            <ToolRow><ComboBox $ml={11} $w={201}><ComboField $w={169} /><Chevron /></ComboBox></ToolRow>
            <ToolRow>
              <Slot $ml={13}><FormatIcon /></Slot><Slot $ml={5}><Tri c="#3f6fb5" /></Slot>
              <Slot $ml={15} $w={14}><NumGlyph>$</NumGlyph></Slot><Rule $ml={7} />
              <Slot $ml={5} $w={18}><NumGlyph>%</NumGlyph></Slot><Rule $ml={6} />
              <Slot $ml={10} $w={8} $mt={-13}><Glyph $size={28}>,</Glyph></Slot>
              <Slot $ml={19}><DecimalIcon more /></Slot><Rule $ml={2} />
              <Slot $ml={3}><DecimalIcon /></Slot>
            </ToolRow>
          </ToolRows>
          <Foot label="Number" launcher />
        </Group>
        <Group $w={107}>
          <LayoutTools>
            <LayoutTool><MergeIcon />Merge</LayoutTool>
            <LayoutTool><SplitIcon />Split</LayoutTool>
            <LayoutTool><AlignIcon />Align<Slot $ml={4}><Tri c="#3f6fb5" /></Slot></LayoutTool>
          </LayoutTools>
          <Foot label="Layout" />
        </Group>
      </Ribbon>

      <Workspace>
        <SidePanel>
          <SideHeader>Report Data<PanelClose /></SideHeader>
          <SideToolbar>
            <ToolbarText>New</ToolbarText><Slot $ml={9}><Tri c="#111" w={6} h={4} /></Slot>
            <Slot $ml={11}><ToolbarText>Edit...</ToolbarText></Slot>
            <Slot $ml={13} $mt={-2}><DeleteIcon /></Slot>
            <Slot $ml={10} $mt={-1}><ArrowIcon /></Slot>
            <Slot $ml={12} $mt={-1}><ArrowIcon down /></Slot>
          </SideToolbar>
          <Tree>
            {tree.map((n, i) => (
              <TreeRow key={i} $level={n.level} $selected={n.selected}>
                <ExpanderCell>{n.exp && <Expander open={n.exp === "-"} />}</ExpanderCell>
                <TreeIcon>{nodeIcons[n.icon]}</TreeIcon>
                {n.text}
              </TreeRow>
            ))}
          </Tree>
        </SidePanel>

        <Main>
          <Designer>
            <HRuler>
              <HScale>
                {range(27).map((n) => <HUnit key={n}><HTick /><HNumber>{n}</HNumber></HUnit>)}
                <HTick />
              </HScale>
              <HMarker />
            </HRuler>
            <DesignRow>
              <VRuler>
                <VScale $h={728} $pad={28}>
                  {range(12).map((n) => <VUnit key={n}><VTick /><VNumber>{n}</VNumber></VUnit>)}
                  <VTick />
                </VScale>
                <VBreak />
                <VScale $h={63} $pad={26}><VTick /></VScale>
                <VMarker />
              </VRuler>
              <Canvas>
                <Page>
                  <PageTitle>Schools Within 1km of [@ReportSuburb]</PageTitle>
                  <PageBody>
                    <UpperRow>
                      <ParamColumn>
                        {params.map(([k, v]) => <ParamBox key={k}><ParamName>{k}</ParamName><span>{v}</span></ParamBox>)}
                      </ParamColumn>
                      <MapItem>
                        <MapTitle>Schools</MapTitle>
                        <MapViewport>
                          <AfricaMap />
                          <Legend>
                            <LegendTitle>Title</LegendTitle>
                            {range(5).map((n) => <LegendItem key={n}><Swatch />Item{n}</LegendItem>)}
                          </Legend>
                          <ScaleBox>
                            <ScaleText>950 km</ScaleText>
                            <svg width="138" height="11" viewBox="0 0 138 11"><path d="M0 0h4v3h128V0h4v3h2v5h-1v3h-4V7H4v3H0z" fill="#f6f6f6" stroke="#bbb" strokeWidth=".5" /></svg>
                            <ScaleText>600 mi</ScaleText>
                          </ScaleBox>
                        </MapViewport>
                      </MapItem>
                    </UpperRow>
                    <ReportTable>
                      {columns.map(([h]) => <HeadCell key={h}>{h}</HeadCell>)}
                      {columns.map(([h, v]) => <DataCell key={h}>{v}</DataCell>)}
                    </ReportTable>
                  </PageBody>
                  <PageFooter>To add an item to the page footer: add an item to the report and then drag it here.</PageFooter>
                </Page>
              </Canvas>
            </DesignRow>
          </Designer>
          <GroupPanes>
            <Pane>
              <PaneHeader><PaneIcon><RowGroupIcon /></PaneIcon>Row Groups</PaneHeader>
              <PaneBody>
                <DetailsBar><GripIcon /><DetailsText>(Details)</DetailsText><DetailsDrop><Tri c="#000" w={11} h={6} /></DetailsDrop></DetailsBar>
              </PaneBody>
            </Pane>
            <Pane>
              <PaneHeader><PaneIcon><ColumnGroupIcon /></PaneIcon>Column Groups<PaneArrow><Tri c="#b0b0b0" w={11} h={6} /></PaneArrow></PaneHeader>
              <PaneBody />
            </Pane>
          </GroupPanes>
        </Main>
      </Workspace>
    </Window>
  );
}
